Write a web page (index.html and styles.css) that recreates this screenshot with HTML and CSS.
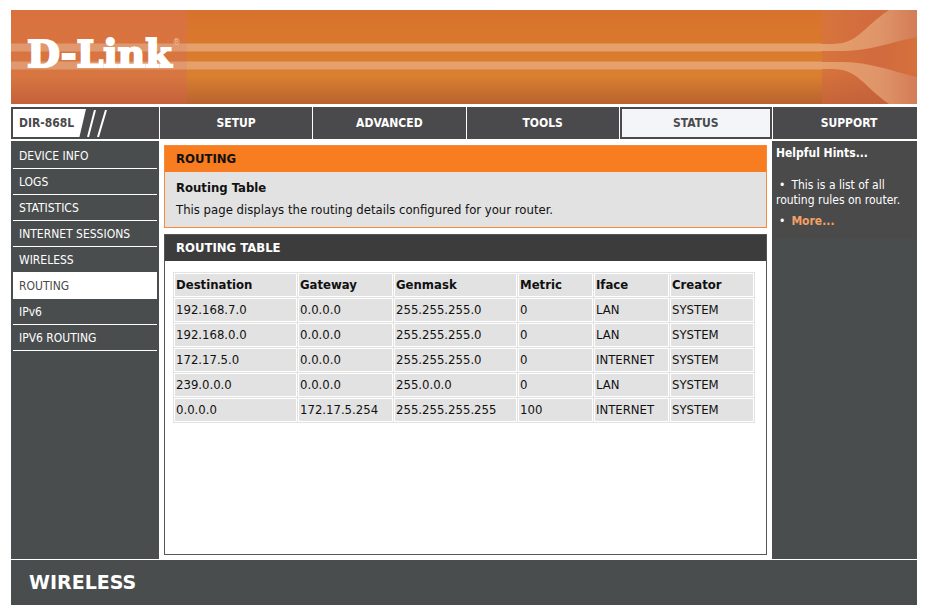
FILE: index.html
```html
<!DOCTYPE html>
<html lang="en">
<head>
<meta charset="utf-8">
<title>D-Link DIR-868L | Routing</title>
<link rel="stylesheet" href="styles.css">
</head>
<body>
<div class="page">
  <header class="masthead">
    <div class="brand"><span class="brand-name">D-Link</span><span class="brand-mark">®</span></div>
    <div class="band"></div>
    <svg class="flare" viewBox="0 0 95 94" preserveAspectRatio="none" aria-hidden="true">
      <defs>
        <linearGradient id="base" x1="0" y1="0" x2="1" y2="0">
          <stop offset="0" stop-color="#d7743c"/>
          <stop offset="0.6" stop-color="#d16a3e"/>
          <stop offset="1" stop-color="#d5713c"/>
        </linearGradient>
        <linearGradient id="beam" x1="0" y1="0" x2="1" y2="0">
          <stop offset="0" stop-color="#e5a06c"/>
          <stop offset="0.6" stop-color="#df9569"/>
          <stop offset="1" stop-color="#d47c57"/>
        </linearGradient>
        <linearGradient id="shade" x1="0" y1="0" x2="0" y2="1">
          <stop offset="0.65" stop-color="#b85a38" stop-opacity="0"/>
          <stop offset="1" stop-color="#b85a38" stop-opacity="0.6"/>
        </linearGradient>
      </defs>
      <rect width="95" height="94" fill="url(#base)"/>
      <rect width="95" height="94" fill="url(#shade)"/>
      <path d="M0 34H10C36 34 40 18 67 0H95V27C70 32 46 41 22 41H0Z" fill="url(#beam)"/>
      <path d="M0 52H22C46 52 70 61 95 67V94H67C40 75 36 59 10 59H0Z" fill="url(#beam)"/>
    </svg>
  </header>

  <nav class="tabs">
    <div class="model">
      <span class="model-name">DIR-868L</span>
      <svg class="slashes" width="24" height="27" viewBox="0 0 24 27" aria-hidden="true">
        <path d="M9 0L2 27M20 0L12 27" stroke="#fff" stroke-width="2" fill="none"/>
      </svg>
    </div>
    <a class="tab" href="#setup">SETUP</a>
    <a class="tab" href="#advanced">ADVANCED</a>
    <a class="tab" href="#tools">TOOLS</a>
    <a class="tab tab-current" href="#status">STATUS</a>
    <a class="tab" href="#support">SUPPORT</a>
  </nav>

  <div class="columns">
    <nav class="side">
      <a href="#device">DEVICE INFO</a>
      <a href="#logs">LOGS</a>
      <a href="#statistics">STATISTICS</a>
      <a href="#sessions">INTERNET SESSIONS</a>
      <a href="#wireless">WIRELESS</a>
      <a class="side-current" href="#routing">ROUTING</a>
      <a href="#ipv6">IPv6</a>
      <a href="#ipv6-routing">IPV6 ROUTING</a>
    </nav>

    <main class="content">
      <section class="intro">
        <h1>ROUTING</h1>
        <div class="intro-body">
          <h2>Routing Table</h2>
          <p>This page displays the routing details configured for your router.</p>
        </div>
      </section>
      <section class="box">
        <h2>ROUTING TABLE</h2>
        <table>
          <colgroup><col class="wide"><col class="mid"><col class="wide"><col class="narrow"><col class="narrow"><col></colgroup>
          <thead>
            <tr><th>Destination</th><th>Gateway</th><th>Genmask</th><th>Metric</th><th>Iface</th><th>Creator</th></tr>
          </thead>
          <tbody>
            <tr><td>192.168.7.0</td><td>0.0.0.0</td><td>255.255.255.0</td><td>0</td><td>LAN</td><td>SYSTEM</td></tr>
            <tr><td>192.168.0.0</td><td>0.0.0.0</td><td>255.255.255.0</td><td>0</td><td>LAN</td><td>SYSTEM</td></tr>
            <tr><td>172.17.5.0</td><td>0.0.0.0</td><td>255.255.255.0</td><td>0</td><td>INTERNET</td><td>SYSTEM</td></tr>
            <tr><td>239.0.0.0</td><td>0.0.0.0</td><td>255.0.0.0</td><td>0</td><td>LAN</td><td>SYSTEM</td></tr>
            <tr><td>0.0.0.0</td><td>172.17.5.254</td><td>255.255.255.255</td><td>100</td><td>INTERNET</td><td>SYSTEM</td></tr>
          </tbody>
        </table>
      </section>
    </main>

    <aside class="hints">
      <div class="hints-body">
        <h2>Helpful Hints...</h2>
        <ul>
          <li>This is a list of all routing rules on router.</li>
          <li><a href="#more">More...</a></li>
        </ul>
      </div>
    </aside>
  </div>

  <footer class="foot">WIRELESS</footer>
</div>
</body>
</html>
```

FILE: styles.css
```css
* {
  box-sizing: border-box;
}

body {
  margin: 0;
  background: #fff;
  color: #111;
  font-family: "DejaVu Sans Condensed", "DejaVu Sans", sans-serif;
  font-size: 12px;
  line-height: 16px;
}

h1,
h2,
p,
ul {
  margin: 0;
  padding: 0;
}

a {
  color: inherit;
  text-decoration: none;
}

.page {
  display: flex;
  flex-direction: column;
  min-height: 100vh;
  padding: 10px 9px 7px 11px;
}

.masthead {
  display: flex;
  height: 94px;
  margin-bottom: 3px;
}

.brand,
.band {
  background:
    linear-gradient(transparent 33px, #e5a06c 34px, #e5a06c 41px, transparent 42px, transparent 51px, #e5a06c 52px, #e5a06c 59px, transparent 60px),
    linear-gradient(#d8722d, #d97a2c 40%, #d98030 70%, #b9622f);
}

.band {
  flex: 1;
}

.brand {
  display: flex;
  align-items: flex-start;
  width: 176px;
  padding: 20px 0 0 16px;
  background:
    linear-gradient(transparent 33px, #e0996f 34px, #e0996f 41px, transparent 42px, transparent 51px, #e0996f 52px, #e0996f 59px, transparent 60px),
    linear-gradient(#d9713f, #d87641 70%, #c4613b);
  color: #fff;
}

.brand-name {
  font-family: "DejaVu Serif", serif;
  font-size: 38px;
  font-weight: bold;
  line-height: 48px;
  -webkit-text-stroke: 2px #fff;
}

.brand-mark {
  padding: 3px 0 0 1px;
  font-size: 9px;
  line-height: 18px;
  color: #f0c3a8;
}

.flare {
  width: 95px;
  height: 94px;
}

.tabs {
  display: grid;
  grid-template-columns: 148px repeat(4, 1fr) 144px;
  gap: 1px;
  height: 32px;
  margin-bottom: 2px;
}

.model,
.tab {
  background: #4a4a4c;
  color: #fff;
  font-weight: bold;
}

.model {
  display: flex;
  align-items: center;
  padding: 2px;
}

.model-name {
  width: 73px;
  padding-left: 6px;
  background: #fff;
  color: #4a4a4c;
  line-height: 28px;
  clip-path: polygon(0 0, 100% 0, 91% 100%, 0 100%);
}

.tab {
  display: flex;
  align-items: center;
  justify-content: center;
}

.tab:last-child {
  padding-left: 8px;
}

.tab-current {
  border: 2px solid #4a4a4c;
  outline: 1px solid #fff;
  background: #f4f5f8;
  color: #4a4a4c;
}

.columns {
  display: grid;
  flex: 1;
  grid-template-columns: 148px 1fr 145px;
  gap: 5px;
  margin-bottom: 1px;
}

.side {
  padding: 2px;
  background: #4a4d4e;
  color: #fff;
}

.side a {
  display: block;
  height: 26px;
  padding: 0 6px;
  border-bottom: 1px solid #fff;
  line-height: 26px;
}

.side .side-current {
  background: #fff;
  color: #4a4a4c;
}

.content {
  display: flex;
  flex-direction: column;
  gap: 6px;
  padding: 4px 0;
}

.content h1,
.content h2 {
  font-size: 13px;
}

.intro {
  border: 1px solid #f58a3c;
  background: #e2e2e2;
}

.intro h1 {
  padding-left: 11px;
  background: #f87c20;
  line-height: 26px;
}

.intro-body {
  padding: 5px 11px 6px;
  font-size: 13px;
  line-height: 22px;
}

.box {
  flex: 1;
  border: 1px solid #555;
}

.box h2 {
  padding-left: 11px;
  background: #3c3c3c;
  color: #fff;
  line-height: 26px;
}

table {
  width: calc(100% - 19px);
  margin: 11px 11px 0 8px;
  border-spacing: 1px;
  table-layout: fixed;
  background: #e2e2e2;
  font-size: 13px;
}

.wide {
  width: 123px;
}

.mid {
  width: 95px;
}

.narrow {
  width: 75px;
}

th,
td {
  height: 24px;
  padding: 0 0 0 1px;
  border: 1px solid #fff;
  line-height: 22px;
  text-align: left;
  white-space: nowrap;
}

.hints {
  background: #4a4d4e;
  color: #fff;
}

.hints-body {
  min-height: 95px;
  padding: 4px;
  background: #4a4a4b;
}

.hints h2 {
  margin-bottom: 17px;
  font-size: 12px;
}

.hints ul {
  list-style: none;
  line-height: 15px;
}

.hints li {
  margin-bottom: 6px;
}

.hints li::before {
  content: "•";
  padding: 0 6px 0 3px;
}

.hints li a {
  color: #f3a064;
  font-weight: bold;
}

.foot {
  padding-left: 18px;
  background: #4a4d4e;
  color: #fff;
  font-family: "DejaVu Sans", sans-serif;
  font-size: 19px;
  font-weight: bold;
  line-height: 45px;
}
```
